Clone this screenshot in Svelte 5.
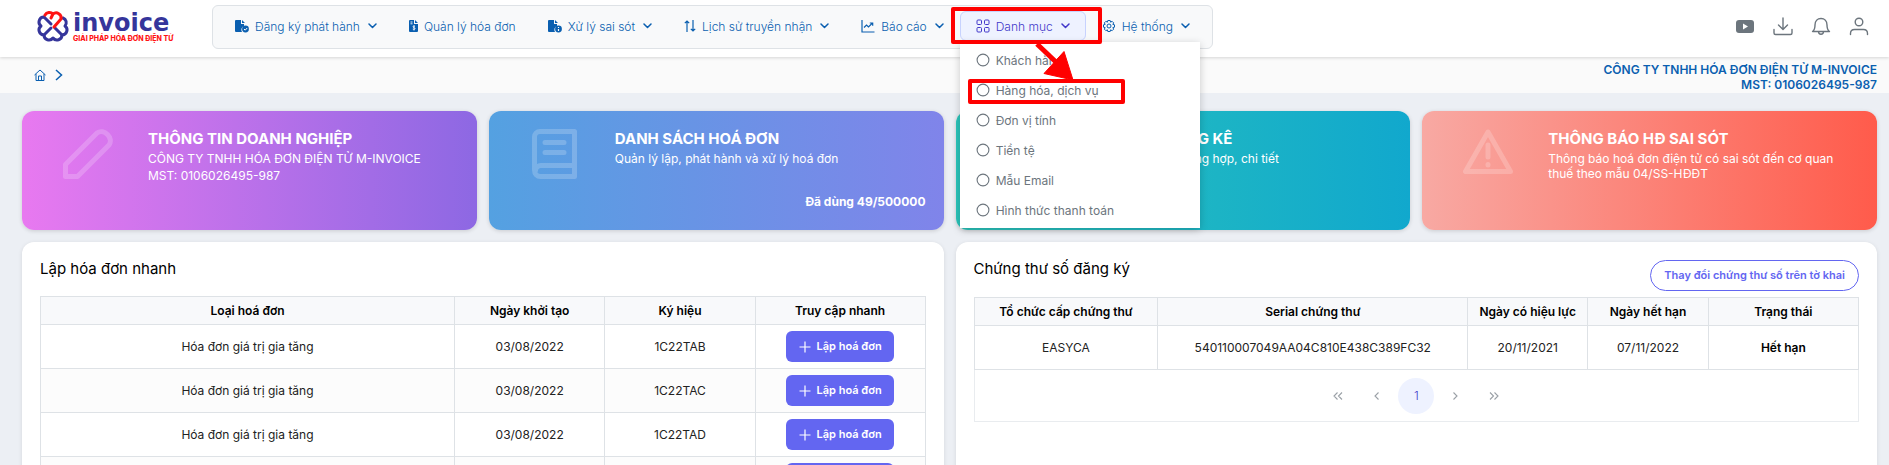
<script>
  const nav = [
    { label: 'Đăng ký phát hành', icon: 'filecheck', w: 14, caret: true },
    { label: 'Quản lý hóa đơn', icon: 'invoice', w: 9, caret: false },
    { label: 'Xử lý sai sót', icon: 'fileinfo', w: 14, caret: true },
    { label: 'Lịch sử truyền nhận', icon: 'sort', w: 12, caret: true },
    { label: 'Báo cáo', icon: 'chart', w: 14, caret: true },
    { label: 'Danh mục', icon: 'grid', w: 14, caret: true, open: true },
    { label: 'Hệ thống', icon: 'gear', w: 14, caret: true }
  ];
  const menu = ['Khách hàng', 'Hàng hóa, dịch vụ', 'Đơn vị tính', 'Tiền tệ', 'Mẫu Email', 'Hình thức thanh toán'];
  const cards = [
    { cls: 'company', icon: 'pencil', title: 'THÔNG TIN DOANH NGHIỆP', lines: ['CÔNG TY TNHH HÓA ĐƠN ĐIỆN TỬ M-INVOICE', 'MST: 0106026495-987'] },
    { cls: 'list', icon: 'book', title: 'DANH SÁCH HOÁ ĐƠN', lines: ['Quản lý lập, phát hành và xử lý hoá đơn'], foot: 'Đã dùng 49/500000' },
    { cls: 'stats', icon: 'bars', title: 'BÁO CÁO THỐNG KÊ', lines: ['Báo cáo thống kê tổng hợp, chi tiết'] },
    { cls: 'alert', icon: 'warn', title: 'THÔNG BÁO HĐ SAI SÓT', lines: ['Thông báo hoá đơn điện tử có sai sót đến cơ quan thuế theo mẫu 04/SS-HĐĐT'] }
  ];
  const rows = ['1C22TAB', '1C22TAC', '1C22TAD', '1C22TAE'];
</script>

<header>
  <a class="logo" href="#home">
    <svg width="36" height="36" viewBox="0 0 36 36" fill="none" stroke="#35359b" stroke-width="3" stroke-linecap="round" stroke-linejoin="round">
      <path d="M9 9A5 5 0 0 0 6 18A5 5 0 0 0 9 27A5 5 0 0 0 18 30A5 5 0 0 0 27 27A5 5 0 0 0 30 18A5 5 0 0 0 28 10" />
      <path d="m9 9 7 7M20 20l7 7M9 27l7-7" />
      <path d="M10 7A5 5 0 0 1 18 6A5 5 0 0 1 26 11L19 19M18 6l-2 4" stroke="#ff1414" />
    </svg>
    <span class="words"><span class="brand">invoice</span><span class="tag">GIẢI PHÁP HÓA ĐƠN ĐIỆN TỬ</span></span>
  </a>

  <nav>
    {#each nav as n}
      <div class="slot">
        <button class:open={n.open}>
          <svg width={n.w} height="14" viewBox="0 0 {n.w} 14" fill="none" stroke="currentColor">
            {#if n.icon === 'filecheck' || n.icon === 'fileinfo'}
              <path d="M1 1h5v4h3v2a4 4 0 0 0-2 6H1a1 1 0 0 1-1-1V2a1 1 0 0 1 1-1zM7 1l3 3H7z" fill="currentColor" stroke="none" />
              <circle cx="10.5" cy="10" r="3.4" fill="currentColor" stroke="none" />
              {#if n.icon === 'filecheck'}
                <path d="m9 10 1.2 1.2L12.2 9" stroke="#fff" />
              {:else}
                <path d="M10.5 8v.9M10.5 9.9V12" stroke="#fff" stroke-width="1.2" />
              {/if}
            {:else if n.icon === 'invoice'}
              <path d="M1 1h4v4h4v7a1 1 0 0 1-1 1H1a1 1 0 0 1-1-1V2a1 1 0 0 1 1-1zM6 1l3 3H6z" fill="currentColor" stroke="none" />
              <path d="M1.5 3h2M1.5 4.800h2M6 7.300c-1-.6-2.300-.3-2 .7.300.8 2 .6 2 1.600 0 .9-1.300 1-2.200.5M5 6.500v5" stroke="#fff" stroke-width=".9" />
            {:else if n.icon === 'sort'}
              <path d="M3 13V2M.8 4.200 3 2l2.200 2.200M9 1v11M6.800 9.800 9 12l2.200-2.200" stroke-width="1.200" />
            {:else if n.icon === 'chart'}
              <path d="M1 1v12h12.500M3 8.500l2.500-2.500 2 2L11.500 4M8.800 4h2.900v2.800" stroke-width="1.200" />
            {:else if n.icon === 'grid'}
              <rect x="1" y="1" width="4.500" height="4.500" rx="1" /><rect x="8.500" y="1" width="4.500" height="4.500" rx="1" />
              <rect x="1" y="8.500" width="4.500" height="4.500" rx="1" /><rect x="8.500" y="8.500" width="4.500" height="4.500" rx="1" />
            {:else}
              <circle cx="7" cy="7" r="2" />
              <path d="M5.800 1h2.400l.4 1.700 1.500-.9 1.600 1.600-.9 1.500 1.700.4v2.400l-1.700.4.9 1.500-1.600 1.600-1.500-.9-.4 1.700H5.800l-.4-1.700-1.500.9-1.600-1.600.9-1.500-1.700-.4V5.300l1.700-.4-.9-1.500 1.600-1.600 1.500.9z" transform="translate(0 .5)" />
            {/if}
          </svg>
          <span>{n.label}</span>
          {#if n.caret}
            <svg class="caret" width="9" height="6" viewBox="0 0 9 6" fill="none" stroke="currentColor" stroke-width="1.500" stroke-linecap="round" stroke-linejoin="round"><path d="m1 1 3.500 3.500L8 1" /></svg>
          {/if}
        </button>
        {#if n.open}
          <ul class="menu">
            {#each menu as m, i}
              <li>
                <a href="#m{i}"><svg width="14" height="14" viewBox="0 0 14 14" fill="none" stroke="#6c757d" stroke-width="1.100"><circle cx="7" cy="7" r="5.900" /></svg>{m}</a>
                {#if i === 1}<i class="mark item-mark"></i>{/if}
              </li>
            {/each}
          </ul>
          <i class="mark nav-mark"></i>
          <svg class="arrow" width="42" height="40" viewBox="0 0 42 40"><path d="m4 2 20 19" stroke="#f00" stroke-width="5" /><path d="M40 38 11 31.500 31 9.500z" fill="#f00" stroke="#f00" stroke-linejoin="round" /></svg>
        {/if}
      </div>
    {/each}
  </nav>

  <div class="tools">
    <button aria-label="Video"><svg width="20" height="20" viewBox="0 0 20 20"><rect x="1" y="4" width="18" height="13" rx="3" fill="#6c757d" /><path d="m8 7.500 5 3-5 3z" fill="#fff" /></svg></button>
    <button aria-label="Tải xuống"><svg width="20" height="20" viewBox="0 0 20 20"><path d="M10 2v11M5.500 9l4.500 4.500L14.500 9M1 13.500V17a1.500 1.500 0 0 0 1.500 1.500h15A1.500 1.500 0 0 0 19 17v-3.500" /></svg></button>
    <button aria-label="Thông báo"><svg width="20" height="20" viewBox="0 0 20 20"><path d="M1.500 15.500h17c-2-1.200-2.500-3-2.500-6.500 0-4-2.500-6.500-6-6.500S4 5 4 9c0 3.500-.5 5.300-2.500 6.500zM7.500 15.500c0 1.800 1 2.700 2.500 2.700s2.500-.9 2.500-2.700" /></svg></button>
    <button aria-label="Tài khoản"><svg width="20" height="20" viewBox="0 0 20 20"><circle cx="10" cy="6" r="3.800" /><path d="M1.500 18.500v-1c0-2.500 1.500-4 4-4h9c2.500 0 4 1.500 4 4v1" /></svg></button>
  </div>
</header>

<div class="crumbs">
  <a href="#home" aria-label="Trang chủ"><svg width="12" height="12" viewBox="0 0 12 12" fill="none" stroke="currentColor"><path d="M.5 6 6 1l5.500 5M2 5v6.500h8V5M4.500 11V7h3v4" /></svg></a>
  <svg width="8" height="12" viewBox="0 0 8 12" fill="none" stroke="currentColor" stroke-width="1.500"><path d="m1 1 5.500 5L1 11" /></svg>
  <p>CÔNG TY TNHH HÓA ĐƠN ĐIỆN TỬ M-INVOICE<br />MST: 0106026495-987</p>
</div>

<main>
  <div class="cards">
    {#each cards as c}
      <section class="card {c.cls}">
        <div class="pic">
          <svg width="50" height="50" viewBox="0 0 50 50" fill="none" stroke="#fff" stroke-width="5" stroke-linejoin="round" stroke-linecap="round">
            {#if c.icon === 'pencil'}
              <path d="M2.500 47.500h12L46 16c5-7-5-17-12-12L2.500 35.500z" />
            {:else if c.icon === 'book'}
              <path d="M44.500 2.500H10C7 2.500 4.500 5 4.500 8v33c0 4 2.500 6.500 6 6.500h34zM44 36.500H11a5.500 5.500 0 0 0-5.500 5M15 13.500h19M15 23.500h19" />
            {:else if c.icon === 'bars'}
              <path d="M3 3v44h44M14 36V25M25 36V12M36 36V19" />
            {:else}
              <path d="M25 3 2.500 42.500h45zM25 16v12M25 35.500v.5" />
            {/if}
          </svg>
        </div>
        <div class="info">
          <h2>{c.title}</h2>
          {#each c.lines as l}<p>{l}</p>{/each}
          {#if c.foot}<strong>{c.foot}</strong>{/if}
        </div>
      </section>
    {/each}
  </div>

  <div class="panels">
    <section class="panel">
      <h3>Lập hóa đơn nhanh</h3>
      <table>
        <colgroup><col /><col style="width:17%" /><col style="width:17%" /><col style="width:19.200%" /></colgroup>
        <thead><tr><th>Loại hoá đơn</th><th>Ngày khởi tạo</th><th>Ký hiệu</th><th>Truy cập nhanh</th></tr></thead>
        <tbody>
          {#each rows as r}
            <tr>
              <td>Hóa đơn giá trị gia tăng</td><td>03/08/2022</td><td>{r}</td>
              <td><button class="add"><svg width="12" height="12" viewBox="0 0 12 12" stroke="#fff" stroke-width="1.200"><path d="M6 .5v11M.5 6h11" /></svg>Lập hoá đơn</button></td>
            </tr>
          {/each}
        </tbody>
      </table>
    </section>

    <section class="panel">
      <div class="head"><h3>Chứng thư số đăng ký</h3><button class="pill">Thay đổi chứng thư số trên tờ khai</button></div>
      <table>
        <colgroup><col style="width:20.800%" /><col /><col style="width:13.600%" /><col style="width:13.600%" /><col style="width:17%" /></colgroup>
        <thead><tr><th>Tổ chức cấp chứng thư</th><th>Serial chứng thư</th><th>Ngày có hiệu lực</th><th>Ngày hết hạn</th><th>Trạng thái</th></tr></thead>
        <tbody><tr><td>EASYCA</td><td>540110007049AA04C810E438C389FC32</td><td>20/11/2021</td><td>07/11/2022</td><td><b>Hết hạn</b></td></tr></tbody>
      </table>
      <div class="pager">
        <button aria-label="Trang đầu"><svg width="10" height="8" viewBox="0 0 10 8"><path d="M4.500.5 1 4l3.500 3.500M9 .5 5.500 4 9 7.500" /></svg></button>
        <button aria-label="Trang trước"><svg width="10" height="8" viewBox="0 0 10 8"><path d="M6.500.5 3 4l3.500 3.500" /></svg></button>
        <button class="current">1</button>
        <button aria-label="Trang sau"><svg width="10" height="8" viewBox="0 0 10 8"><path d="M3.500.5 7 4 3.500 7.500" /></svg></button>
        <button aria-label="Trang cuối"><svg width="10" height="8" viewBox="0 0 10 8"><path d="M1 .5 4.500 4 1 7.500M5.500.5 9 4 5.500 7.500" /></svg></button>
      </div>
    </section>
  </div>
</main>

<style>
  :global(body) { background: #eceff4; font: 300 12px/15px Inter, sans-serif; color: #111; overflow: hidden; }
  :global(*) { box-sizing: border-box; }
  button { font: inherit; color: inherit; border: 0; background: none; padding: 0; cursor: pointer; }
  a { color: inherit; text-decoration: none; }
  h2, h3, p, ul { margin: 0; padding: 0; }
  svg { display: block; flex: none; }

  header { display: flex; align-items: flex-start; height: 57px; padding: 5px 20px 0 35px; background: #fff; box-shadow: 0 1px 3px rgba(0, 0, 0, .15); position: relative; z-index: 2; }
  .logo { display: flex; width: 177px; padding-top: 3px; flex: none; }
  .words { display: flex; flex-direction: column; padding: 3px 0 0 2px; white-space: nowrap; }
  .brand { font: 700 24px/24px "DejaVu Sans", sans-serif; color: #35359b; }
  .tag { font: 800 7px/8px Inter, sans-serif; color: #ff1414; }

  nav { display: flex; height: 44px; padding: 5px 6px 7px; border: 1px solid #dee2e6; border-radius: 6px; background: #f8f9fa; }
  .slot { position: relative; }
  .slot > button { display: flex; align-items: center; height: 30px; padding: 0 15px; border: 1px solid transparent; border-radius: 6px; color: #0a5fb0; white-space: nowrap; }
  .slot span { margin-left: 6px; }
  .caret { margin-left: 8px; }
  .slot > button.open { background: #eef2ff; border-color: #c7d2fe; color: #4338ca; }
  .menu { position: absolute; top: 31px; left: 0; width: 240px; padding: 3px 0; background: #fff; list-style: none; font-weight: 400; box-shadow: 0 2px 8px rgba(0, 0, 0, .2); }
  .menu li { position: relative; }
  .menu a { display: flex; align-items: center; gap: 6px; height: 30px; padding: 0 16px; color: #6c757d; }
  .mark { position: absolute; border: 4px solid #f00; border-radius: 2px; pointer-events: none; }
  .nav-mark { inset: -4px -16px -3px -9px; }
  .item-mark { top: 4px; left: 8px; width: 157px; height: 25px; }
  .arrow { position: absolute; top: 31px; left: 73px; pointer-events: none; }

  .tools { display: flex; gap: 18px; margin: 11px 0 0 auto; }
  .tools svg { fill: none; stroke: #6c757d; stroke-width: 1.400; stroke-linecap: round; stroke-linejoin: round; }
  .tools rect, .tools svg > path[fill] { stroke: none; }

  .crumbs { display: flex; align-items: center; gap: 9px; height: 36px; padding: 0 12px 0 34px; background: #fafafa; color: #0a5fb0; }
  .crumbs p { margin-left: auto; padding-top: 4px; font-weight: 600; text-align: right; }

  main { padding: 18px 12px 0 22px; }
  .cards { display: grid; grid-template-columns: repeat(4, 1fr); gap: 12px; }
  .card { display: flex; min-height: 119px; padding: 18px; border-radius: 12px; color: #fff; font-weight: 400; box-shadow: 0 1px 4px rgba(0, 0, 0, .15); }
  .company { background: linear-gradient(90deg, #e879f0, #8d68e3); }
  .list { background: linear-gradient(90deg, #54a1e1, #8084ea); }
  .stats { background: linear-gradient(90deg, #2bc4ba, #11a8cd); }
  .alert { background: linear-gradient(90deg, #f8a9a3, #ff5b4b); }
  .pic { width: 108px; padding-left: 23px; flex: none; opacity: .2; }
  .info { display: flex; flex-direction: column; flex: 1; gap: 2px; }
  .info h2 { font-size: 15px; line-height: 20px; font-weight: 700; }
  .info strong { margin: auto 0 3px; align-self: flex-end; font-weight: 700; }

  .panels { display: grid; grid-template-columns: 1fr 1fr; gap: 12px; margin-top: 12px; }
  .panel { min-height: 260px; padding: 18px; border-radius: 12px; background: #fff; box-shadow: 0 1px 4px rgba(0, 0, 0, .1); }
  h3 { font-size: 15px; line-height: 18px; font-weight: 400; color: #000; }
  .panel > h3 { margin-bottom: 18px; }
  .head { display: flex; justify-content: space-between; margin-bottom: 6px; }
  table { width: 100%; border-collapse: collapse; table-layout: fixed; }
  th, td { border: 1px solid #dee2e6; padding: 0; text-align: center; }
  th { height: 28px; background: #f8f9fb; font-weight: 600; color: #000; }
  td { height: 44px; font-weight: 400; color: #222; }
  tbody tr:nth-child(even) { background: #fcfcfc; }
  b { font-weight: 600; color: #000; }
  .add { display: inline-flex; align-items: center; justify-content: center; gap: 6px; width: 108px; height: 31px; border-radius: 6px; background: #6366f1; color: #fff; font-size: 11px; font-weight: 600; vertical-align: middle; }
  .pill { height: 31px; padding: 0 13px; border: 1px solid #6366f1; border-radius: 16px; color: #6366f1; font-size: 11px; font-weight: 600; }
  .pager { display: flex; justify-content: center; align-items: center; gap: 3px; height: 52px; border: 1px solid #e9ecef; border-top: 0; }
  .pager button { display: grid; place-items: center; width: 36px; height: 36px; border-radius: 50%; }
  .pager svg { fill: none; stroke: #9aa0a6; stroke-width: 1.100; }
  .pager .current { background: #eef2ff; color: #4338ca; }
</style>
